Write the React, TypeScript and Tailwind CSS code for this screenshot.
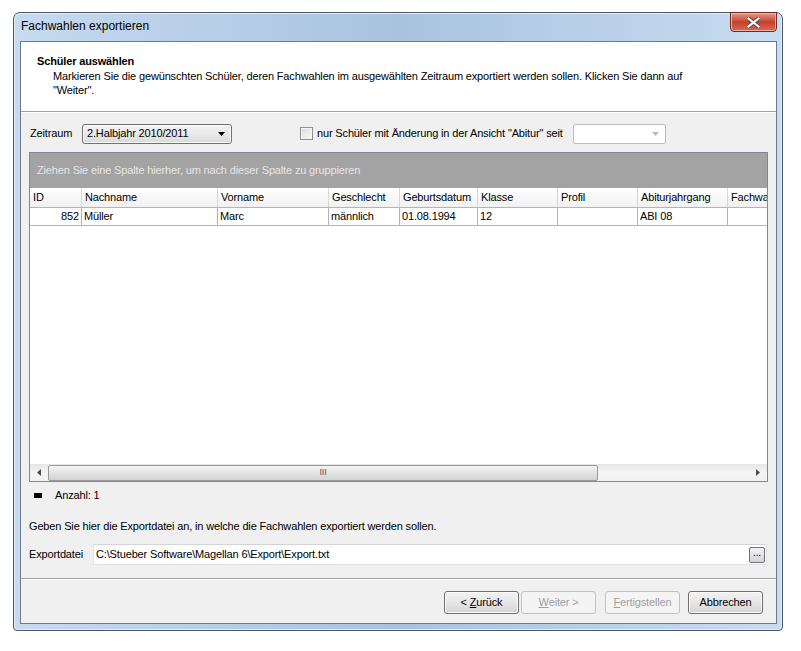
const columns = [
  { label: 'ID', w: 52 },
  { label: 'Nachname', w: 136 },
  { label: 'Vorname', w: 111 },
  { label: 'Geschlecht', w: 71 },
  { label: 'Geburtsdatum', w: 78 },
  { label: 'Klasse', w: 80 },
  { label: 'Profil', w: 80 },
  { label: 'Abiturjahrgang', w: 90 },
  { label: 'Fachwahlen', w: 100 },
]

const row = ['852', 'Müller', 'Marc', 'männlich', '01.08.1994', '12', '', 'ABI 08', '']

function WinButton({
  children,
  disabled = false,
  className = '',
}: {
  children: React.ReactNode
  disabled?: boolean
  className?: string
}) {
  return (
    <button
      className={
        'flex h-[23px] w-[75px] shrink-0 items-center justify-center rounded-[3px] border text-[11px] ' +
        (disabled
          ? 'border-[#bfc3c6] bg-[#f4f4f4] text-[#a0a0a0]'
          : 'border-[#707070] bg-gradient-to-b from-[#f2f2f2] via-[#e6e6e6] to-[#d4d4d4] text-black shadow-[inset_0_0_0_1px_#fbfbfb]') +
        ' ' +
        className
      }
    >
      {children}
    </button>
  )
}

function ScrollArrow({ dir }: { dir: 'left' | 'right' }) {
  return (
    <svg width="4" height="7" viewBox="0 0 4 7">
      {dir === 'left' ? (
        <path d="M4 0 L0 3.5 L4 7 Z" fill="#4d4d4d" />
      ) : (
        <path d="M0 0 L4 3.5 L0 7 Z" fill="#4d4d4d" />
      )}
    </svg>
  )
}

export default function App() {
  return (
    <div className="h-[651px] w-[801px] bg-white pl-[13px] pt-[12px] font-[Tahoma,'Liberation_Sans',Arial,sans-serif] text-[11px] tracking-[-0.15px] text-black">
      {/* window frame */}
      <div className="flex h-[619px] w-[770px] flex-col rounded-t-[7px] rounded-b-[4px] border border-[#4b5563] bg-gradient-to-r from-[#c6daf0] via-[#a9c3df] to-[#c8dcf1] shadow-[inset_0_0_0_1px_#e4eefa]">
        {/* title bar */}
        <div className="flex h-[28px] items-start pl-[7px] pr-[5px]">
          <span className="mt-[6px] font-['Liberation_Sans',Arial,sans-serif] text-[12px] leading-[15px] tracking-normal text-black">
            Fachwahlen exportieren
          </span>
          <div className="ml-auto -mt-[1px] flex h-[20px] w-[47px] items-center justify-center rounded-b-[4px] border border-[#6d2a23] bg-gradient-to-b from-[#e49a8b] via-[#c4402e] to-[#d66a55] shadow-[inset_0_0_0_1px_#eeb2a6]">
            <svg width="13" height="11" viewBox="0 0 13 11">
              <path
                d="M1 1 L12 10 M12 1 L1 10"
                stroke="#4a4a4a"
                strokeWidth="4"
                strokeLinecap="square"
              />
              <path
                d="M1.5 1.5 L11.5 9.5 M11.5 1.5 L1.5 9.5"
                stroke="#ffffff"
                strokeWidth="2.2"
                strokeLinecap="square"
              />
            </svg>
          </div>
        </div>

        {/* client area */}
        <div className="ml-[6px] flex h-[583px] w-[757px] flex-col border border-[#6b7c92] bg-[#f0f0f0]">
          {/* header */}
          <div className="h-[70px] border-b border-[#a0a0a0] bg-white pl-[16px] pt-[12px]">
            <div className="text-[11px] font-bold leading-[15px]">Schüler auswählen</div>
            <div className="pl-[16px] leading-[14px]">
              Markieren Sie die gewünschten Schüler, deren Fachwahlen im ausgewählten Zeitraum exportiert werden sollen. Klicken Sie dann auf
              <br />
              "Weiter".
            </div>
          </div>

          {/* body */}
          <div className="flex h-[466px] flex-col border-t border-white pl-[8px] pt-[11px]">
            {/* filter row */}
            <div className="flex h-[19px] items-center">
              <span className="ml-[1px] w-[52px]">Zeitraum</span>
              <div className="flex h-[20px] w-[150px] items-center rounded-[3px] border border-[#707070] bg-gradient-to-b from-[#f2f2f2] via-[#e9e9e9] to-[#d9d9d9] pl-[4px] pr-[6px] shadow-[inset_0_0_0_1px_#fbfbfb]">
                <span>2.Halbjahr 2010/2011</span>
                <svg className="ml-auto" width="7" height="4" viewBox="0 0 7 4">
                  <path d="M0 0 L7 0 L3.5 4 Z" fill="#000" />
                </svg>
              </div>
              <div className="ml-[68px] h-[13px] w-[13px] shrink-0 border border-[#8e8f8f] bg-gradient-to-br from-[#dcdcdc] to-[#fbfbfb] shadow-[inset_0_0_0_1px_#f4f4f4]" />
              <span className="ml-[4px] w-[256px] shrink-0 whitespace-nowrap">
                nur Schüler mit Änderung in der Ansicht "Abitur" seit
              </span>
              <div className="flex h-[20px] w-[93px] items-center rounded-[2px] border border-[#b9bcc1] bg-white pr-[6px]">
                <svg className="ml-auto" width="7" height="4" viewBox="0 0 7 4">
                  <path d="M0 0 L7 0 L3.5 4 Z" fill="#b8b8b8" />
                </svg>
              </div>
            </div>

            {/* grid */}
            <div className="mt-[9px] flex h-[330px] w-[739px] flex-col border border-[#828790] bg-white">
              <div className="flex h-[35px] items-center bg-[#a3a3a3] pl-[7px] text-[#e6e6e6]">
                Ziehen Sie eine Spalte hierher, um nach dieser Spalte zu gruppieren
              </div>
              <div className="flex-1 overflow-hidden">
                <div className="flex h-[19px] bg-gradient-to-b from-white to-[#f1f1f1]">
                  {columns.map((c) => (
                    <div
                      key={c.label}
                      style={{ width: c.w }}
                      className="flex shrink-0 items-center overflow-hidden whitespace-nowrap border-r border-[#d8d8d8] pl-[3px]"
                    >
                      {c.label}
                    </div>
                  ))}
                </div>
                <div className="flex h-[19px] border-y border-[#b4b4b4]">
                  {columns.map((c, i) => (
                    <div
                      key={c.label}
                      style={{ width: c.w }}
                      className={
                        'flex shrink-0 items-center overflow-hidden whitespace-nowrap border-r border-[#b4b4b4] ' +
                        (i === 0 ? 'justify-end pr-[2px]' : 'pl-[2px]')
                      }
                    >
                      {row[i]}
                    </div>
                  ))}
                </div>
              </div>
              {/* horizontal scrollbar */}
              <div className="flex h-[17px] items-center bg-gradient-to-b from-[#e6e6e6] via-[#f4f4f4] to-[#f0f0f0]">
                <div className="flex w-[18px] justify-center">
                  <ScrollArrow dir="left" />
                </div>
                <div className="flex h-[16px] w-[550px] items-center justify-center rounded-[2px] border border-[#9a9a9a] bg-gradient-to-b from-[#f3f3f3] via-[#e2e2e2] to-[#d3d3d3] text-[9px] leading-none text-[#555]">
                  III
                </div>
                <div className="ml-auto flex w-[18px] justify-center">
                  <ScrollArrow dir="right" />
                </div>
              </div>
            </div>

            {/* count */}
            <div className="mt-[6px] flex h-[14px] items-center">
              <div className="ml-[5px] h-[5px] w-[8px] bg-black" />
              <span className="ml-[13px]">Anzahl: 1</span>
            </div>

            <div className="mt-[17px] leading-[14px]">
              Geben Sie hier die Exportdatei an, in welche die Fachwahlen exportiert werden sollen.
            </div>

            {/* export file */}
            <div className="mt-[11px] flex h-[21px] items-center">
              <span className="w-[64px]">Exportdatei</span>
              <div className="flex h-[21px] w-[674px] items-center border border-[#e2e3ea] border-t-[#d3d4da] bg-white pl-[2px] pr-[1px]">
                <span>C:\Stueber Software\Magellan 6\Export\Export.txt</span>
                <div className="ml-auto flex h-[16px] w-[16px] items-center justify-center rounded-[2px] border border-[#707070] bg-gradient-to-b from-[#f2f2f2] to-[#d6d6d6] pb-[4px] text-[10px] leading-none">
                  ...
                </div>
              </div>
            </div>
          </div>

          {/* footer */}
          <div className="flex flex-1 items-start justify-end border-t border-[#a0a0a0] pr-[13px] pt-[12px] shadow-[inset_0_1px_0_#ffffff]">
            <WinButton>
              &lt;&nbsp;<u>Z</u>urück
            </WinButton>
            <WinButton disabled className="ml-[2px]">
              <u>W</u>eiter &gt;
            </WinButton>
            <WinButton disabled className="ml-[9px]">
              <u>F</u>ertigstellen
            </WinButton>
            <WinButton className="ml-[8px]">Abbrechen</WinButton>
          </div>
        </div>
      </div>
    </div>
  )
}
